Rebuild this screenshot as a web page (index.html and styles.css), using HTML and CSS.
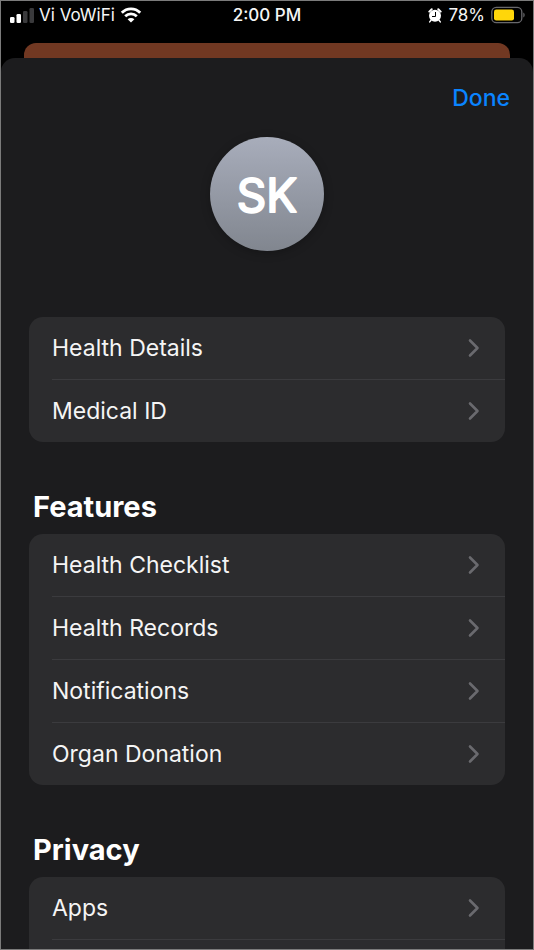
FILE: index.html
```html
<!DOCTYPE html>
<html lang="en">
<head>
<meta charset="utf-8">
<meta name="viewport" content="width=device-width, initial-scale=1">
<title>Health Profile</title>
<link rel="stylesheet" href="styles.css">
</head>
<body>
<svg class="defs" aria-hidden="true">
  <symbol id="chevron" viewBox="0 0 12 20"><path d="M2 2.500 9.500 10 2 17.500" fill="none" stroke="currentColor" stroke-width="2.600" stroke-linecap="round" stroke-linejoin="round"/></symbol>
</svg>
<div class="phone">
  <header class="status">
    <div class="carrier">
      <svg width="24" height="16" viewBox="0 0 24 16" aria-hidden="true">
        <rect x="0" y="10" width="4.500" height="6" rx="1.300" fill="#fff"/>
        <rect x="6.500" y="7" width="4.500" height="9" rx="1.300" fill="#fff"/>
        <rect x="13" y="4" width="4.500" height="12" rx="1.300" fill="#3a3a3c"/>
        <rect x="19.500" y="1" width="4.500" height="15" rx="1.300" fill="#3a3a3c"/>
      </svg>
      <span>Vi VoWiFi</span>
      <svg width="22" height="16" viewBox="0 0 22 16" aria-hidden="true">
        <path d="M1.800 5.800C7 .6 15 .6 20.200 5.800" fill="none" stroke="#fff" stroke-width="2.900"/>
        <path d="M5.200 9.300c3.300-3.200 8.300-3.200 11.600 0" fill="none" stroke="#fff" stroke-width="2.800"/>
        <path d="M11 15.500 7.600 12.200c1.900-1.700 4.900-1.700 6.800 0z" fill="#fff"/>
      </svg>
    </div>
    <time class="clock">2:00 PM</time>
    <div class="power">
      <svg width="14" height="15" viewBox="0 0 14 15" aria-hidden="true">
        <circle cx="7" cy="7.700" r="6" fill="#fff"/>
        <path d="M1.300 3.600 3.700 1.300M12.700 3.600 10.300 1.300" stroke="#fff" stroke-width="2" stroke-linecap="round"/>
        <path d="M3 12.300 1.700 13.900M11 12.300 12.300 13.900" stroke="#fff" stroke-width="1.500" stroke-linecap="round"/>
        <path d="M7.500 4v4.500H4" fill="none" stroke="#000" stroke-width="1"/>
      </svg>
      <span>78%</span>
      <svg width="34" height="18" viewBox="0 0 34 18" aria-hidden="true">
        <rect x=".8" y="1.300" width="30" height="15.400" rx="4.500" fill="none" stroke="#68686c" stroke-width="1.300"/>
        <rect x="3" y="3.500" width="20" height="11" rx="2.300" fill="#ffd60a"/>
        <path d="M32.300 6.500c1.800.8 1.800 4.200 0 5z" fill="#68686c"/>
      </svg>
    </div>
  </header>
  <div class="backdrop"></div>
  <main class="sheet">
    <div class="toolbar"><button class="done" type="button">Done</button></div>
    <div class="avatar">
      <svg viewBox="0 0 114 114" role="img" aria-label="SK"><text class="initials" x="57" y="75" text-anchor="middle">SK</text></svg>
    </div>
    <nav class="card">
      <a class="row" href="#details"><span>Health Details</span><svg class="chevron"><use href="#chevron"/></svg></a>
      <a class="row" href="#medical"><span>Medical ID</span><svg class="chevron"><use href="#chevron"/></svg></a>
    </nav>
    <h2>Features</h2>
    <nav class="card">
      <a class="row" href="#checklist"><span>Health Checklist</span><svg class="chevron"><use href="#chevron"/></svg></a>
      <a class="row" href="#records"><span>Health Records</span><svg class="chevron"><use href="#chevron"/></svg></a>
      <a class="row" href="#notifications"><span>Notifications</span><svg class="chevron"><use href="#chevron"/></svg></a>
      <a class="row" href="#organ"><span>Organ Donation</span><svg class="chevron"><use href="#chevron"/></svg></a>
    </nav>
    <h2>Privacy</h2>
    <nav class="card">
      <a class="row" href="#apps"><span>Apps</span><svg class="chevron"><use href="#chevron"/></svg></a>
      <div class="row"></div>
    </nav>
  </main>
</div>
</body>
</html>
```
FILE: styles.css
```css
* { box-sizing: border-box; }

body {
  margin: 0;
  background: #000;
  color: #f5f5f5;
  font-family: Inter, "Liberation Sans", sans-serif;
}

.defs { display: none; }

.phone {
  height: 100vh;
  overflow: hidden;
  display: flex;
  flex-direction: column;
  border: 1px solid #7b7b7b;
  background: #000;
}

.status {
  flex: none;
  display: grid;
  grid-template-columns: 1fr auto 1fr;
  align-items: center;
  height: 28px;
  margin-bottom: 14px;
  padding: 0 9px;
  font-size: 17px;
}

.carrier, .power {
  display: flex;
  align-items: center;
  gap: 5px;
}

.power {
  justify-content: flex-end;
  gap: 6px;
  margin-right: -1px;
}

.clock { font-weight: 500; }

.backdrop {
  flex: none;
  height: 15px;
  margin: 0 23px;
  border-radius: 12px 12px 0 0;
  background: #713822;
}

.sheet {
  flex: 1;
  min-height: 0;
  overflow: hidden;
  padding: 0 28px;
  border-radius: 14px 14px 0 0;
  background: #1c1c1e;
}

.toolbar {
  display: flex;
  justify-content: flex-end;
  margin-right: -5px;
  padding-top: 24px;
}

.done {
  padding: 0;
  border: 0;
  background: none;
  color: #0a84ff;
  font: 500 23px/32px Inter, "Liberation Sans", sans-serif;
}

.avatar {
  width: 114px;
  height: 114px;
  margin: 23px auto 66px;
  border-radius: 50%;
  background: linear-gradient(#a8adbb, #81868f);
  box-shadow: 0 2px 10px rgb(0 0 0 / 25%);
}

.avatar svg { display: block; width: 100%; }

.initials {
  fill: #fff;
  stroke: #fff;
  stroke-width: 2px;
  stroke-linejoin: round;
  font-size: 46px;
  font-weight: 400;
}

.card {
  overflow: hidden;
  border-radius: 14px;
  background: #2c2c2e;
}

.row {
  display: flex;
  align-items: center;
  justify-content: space-between;
  height: 62px;
  margin-left: 23px;
  padding-right: 25px;
  color: inherit;
  font-size: 23px;
  text-decoration: none;
}

.row + .row {
  height: 63px;
  border-top: 1px solid #3b3b3e;
}

.chevron {
  width: 12px;
  height: 20px;
  color: #6a6a6e;
}

h2 {
  margin: 49px 0 11px 4px;
  color: #fff;
  font-size: 29px;
  font-weight: 700;
  line-height: 32px;
}
```
